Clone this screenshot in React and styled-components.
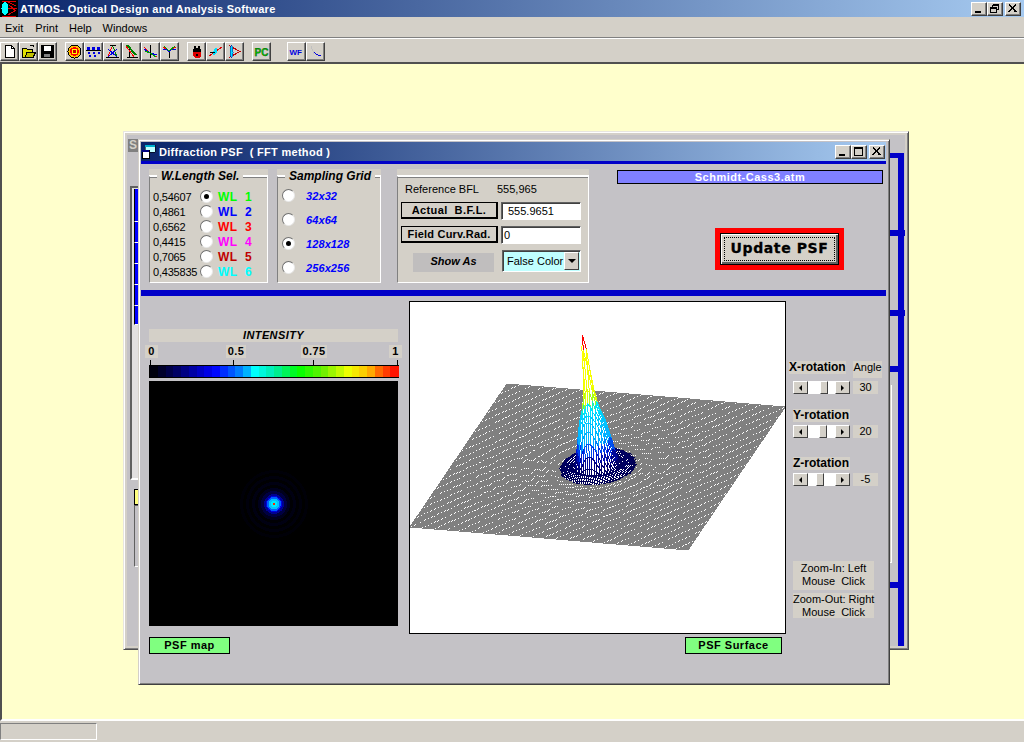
import React from "react";
import styled, { createGlobalStyle } from "styled-components";

const FACE = "#d4d0c8";
const PANEL = "#c4c2c6";
const RAIL = "#0000c8";

const GlobalStyle = createGlobalStyle`
  html, body { margin: 0; padding: 0; overflow: hidden; background: ${FACE}; }
  body { font-family: "Liberation Sans", Arial, sans-serif; font-size: 11px; color: #000; }
`;

/* ---------- colour helpers and plot data ---------- */

const lerpStops = (stops, t) => {
  const v = Math.max(0, Math.min(1, t));
  for (let i = 1; i < stops.length; i++) {
    if (v <= stops[i][0]) {
      const [t0, c0] = stops[i - 1];
      const [t1, c1] = stops[i];
      const k = (v - t0) / (t1 - t0 || 1);
      const rgb = c0.map((c, n) => Math.round(c + (c1[n] - c) * k));
      return `rgb(${rgb.join(",")})`;
    }
  }
  return `rgb(${stops[stops.length - 1][1].join(",")})`;
};

const BAR_STOPS = [
  [0, [0, 0, 0]],
  [0.12, [0, 0, 110]],
  [0.26, [0, 0, 255]],
  [0.38, [0, 150, 255]],
  [0.42, [0, 255, 255]],
  [0.5, [0, 235, 170]],
  [0.6, [0, 255, 0]],
  [0.7, [110, 240, 0]],
  [0.8, [240, 255, 0]],
  [0.88, [255, 190, 0]],
  [0.93, [255, 90, 0]],
  [1, [255, 0, 0]],
];

const SURFACE_STOPS = [
  [0, [0, 0, 80]],
  [0.12, [0, 0, 130]],
  [0.2, [0, 30, 230]],
  [0.28, [0, 170, 255]],
  [0.5, [0, 230, 255]],
  [0.55, [60, 255, 70]],
  [0.6, [225, 255, 0]],
  [1, [255, 255, 0]],
];

const PROFILE = [
  [0, 132], [1, 118], [2, 80], [3.6, 58], [5.6, 46], [7.4, 26], [8.8, 9], [10, 2.5], [11.2, 3.5], [13, 5.5], [14.6, 3], [16, 0.6],
];

const heightAt = (r) => {
  if (r >= 16) {
    return 1.2 * Math.exp(-(r - 16) / 18) * Math.cos((r * Math.PI) / 6) ** 2;
  }
  for (let i = 1; i < PROFILE.length; i++) {
    if (r <= PROFILE[i][0]) {
      const [a, ha] = PROFILE[i - 1];
      const [b, hb] = PROFILE[i];
      return ha + ((hb - ha) * (r - a)) / (b - a);
    }
  }
  return 0;
};

const GRID = 128;
// plane corners, in plot coordinates
const ORIGIN = [97, 82];
const U = [278 / GRID, 23 / GRID];
const V = [-97 / GRID, 143 / GRID];

const project = (i, j) => {
  const r = Math.hypot(i - GRID / 2, j - GRID / 2);
  const h = heightAt(r);
  return {
    x: ORIGIN[0] + U[0] * i + V[0] * j - (h * 15) / 132,
    y: ORIGIN[1] + U[1] * i + V[1] * j - h,
    h,
    r,
  };
};

const buildSurface = () => {
  const quads = [];
  for (let j = 0; j < GRID; j++) {
    for (let i = 0; i < GRID; i++) {
      const a = project(i, j);
      const b = project(i + 1, j);
      const c = project(i + 1, j + 1);
      const d = project(i, j + 1);
      const h = Math.max(a.h, b.h, c.h, d.h);
      let stroke = "#808080";
      if (a.r < 16.5) {
        stroke = lerpStops(SURFACE_STOPS, h / 132);
        if (h > 118 && i >= GRID / 2 && j >= GRID / 2) stroke = "#ff0000";
      }
      quads.push({
        key: `${i}-${j}`,
        points: [a, b, c, d].map((p) => `${p.x.toFixed(1)},${p.y.toFixed(1)}`).join(" "),
        stroke,
      });
    }
  }
  return quads;
};

const SURFACE = buildSurface();
const BAR_SEGMENTS = Array.from({ length: 32 }, (_, n) => lerpStops(BAR_STOPS, (n + 0.5) / 32));
const BAR_TICKS = [1, 84, 164, 248];
const SPOT_RINGS = [
  [34, "#000008"], [31, "#000000"], [28, "#00000c"], [25, "#000002"], [22, "#000012"], [19, "#000004"],
  [16, "#00001c"], [13, "#000040"], [10, "#000090"], [8, "#0000e0"], [7, "#0060ff"], [5.5, "#00c0ff"],
  [3, "#00e8ff"], [1.5, "#00ff80"],
];

const WAVELENGTHS = [
  { value: "0,54607", color: "#00ff00", on: true },
  { value: "0,4861", color: "#0000ff" },
  { value: "0,6562", color: "#ff0000" },
  { value: "0,4415", color: "#ff00ff" },
  { value: "0,7065", color: "#c00000" },
  { value: "0,435835", color: "#00ffff" },
];
const GRIDS = [
  { label: "32x32" },
  { label: "64x64" },
  { label: "128x128", on: true },
  { label: "256x256" },
];
const ROTATIONS = [
  { label: "X-rotation", value: "30", at: 12, first: true },
  { label: "Y-rotation", value: "20", at: 11, top: 15 },
  { label: "Z-rotation", value: "-5", at: 8, top: 19 },
];

/* ---------- frame ---------- */

const Screen = styled.div`
  width: 1024px;
  height: 742px;
  display: flex;
  flex-direction: column;
  background: ${FACE};
  overflow: hidden;
`;

const TitleBar = styled.div`
  height: ${(p) => p.$height || 17}px;
  flex: none;
  display: flex;
  align-items: center;
  background: linear-gradient(90deg, #0a246a, #a6caf0);
  color: #fff;
  font-weight: bold;
  font-size: 11px;
  letter-spacing: 0.3px;
  white-space: pre;
`;

const TitleText = styled.span`
  flex: 1;
  margin-left: ${(p) => p.$gap || 2}px;
`;

const WinButtons = styled.div`
  display: flex;
  margin-right: ${(p) => p.$right}px;
`;

const WinButton = styled.div`
  width: 16px;
  height: 14px;
  box-sizing: border-box;
  margin-left: ${(p) => p.$gap || 0}px;
  background: ${FACE};
  border: 1px solid;
  border-color: #fff #404040 #404040 #fff;
  box-shadow: inset -1px -1px #808080;
  display: flex;
  align-items: center;
  justify-content: center;

  svg { display: block; }
`;

const MenuBar = styled.div`
  flex: none;
  display: flex;
  align-items: center;
  padding: 1px 0 0 5px;
  box-sizing: border-box;
  height: 21px;
  border-bottom: 1px solid #808080;
  box-shadow: 0 1px #fff;
  font-size: 11px;
`;

const MenuItem = styled.span`
  margin-right: ${(p) => p.$gap}px;
`;

const ToolBar = styled.div`
  height: 25px;
  flex: none;
  margin-top: 1px;
  display: flex;
  align-items: center;
  padding-top: 1px;
  box-sizing: border-box;
  border-bottom: 2px solid #505050;
`;

const ToolGroup = styled.div`
  display: flex;
  margin-left: ${(p) => p.$gap || 0}px;
`;

const ToolButton = styled.div`
  width: 19px;
  height: 19px;
  box-sizing: border-box;
  border: 1px solid;
  border-color: #fff #404040 #404040 #fff;
  box-shadow: inset -1px -1px #808080;
  background: ${FACE};
  display: flex;
  align-items: center;
  justify-content: center;

  svg { display: block; }
`;

const Workspace = styled.div`
  position: relative;
  flex: 1;
  background: #ffffcc;
  border-left: 2px solid #505050;
  border-bottom: 2px solid #fff;
`;

const StatusBar = styled.div`
  height: 21px;
  flex: none;
  padding-top: 2px;
  box-sizing: border-box;
`;

const StatusCell = styled.div`
  width: 97px;
  height: 17px;
  box-sizing: border-box;
  border: 1px solid;
  border-color: #808080 #fff #fff #808080;
`;

/* ---------- window behind the dialog ---------- */

const BackWindow = styled.div`
  position: absolute;
  left: 121px;
  top: 67px;
  width: 786px;
  height: 519px;
  box-sizing: border-box;
  display: flex;
  justify-content: space-between;
  background: ${PANEL};
  border: 1px solid;
  border-color: #e8e6e0 #505050 #505050 #e8e6e0;
  box-shadow: inset 1px 1px #fff, inset -1px -1px #808080, inset 3px 3px ${FACE}, inset -3px -3px ${FACE};
`;

const LeftStrip = styled.div`
  width: 40px;
  padding: 7px 0 0 4px;
  display: flex;
  flex-direction: column;
`;

const StubTitle = styled.div`
  height: 13px;
  background: #808080;
  color: #d4d0c8;
  font-weight: bold;
  font-size: 12px;
  padding-left: 1px;
  line-height: 13px;
`;

const StubList = styled.div`
  margin: 34px 0 0 2px;
  height: 294px;
  box-sizing: border-box;
  padding: 1px 0 0 2px;
  background: #e2e0e0;
  border: 2px solid;
  border-color: #606060 #fff #fff #606060;
`;

const StubCell = styled.div`
  height: ${(p) => p.$height}px;
  background: #0000ff;
  border-bottom: 1px solid #fff;
  border-left: 1px solid #000;
`;

const StubYellow = styled.div`
  margin: 9px 0 0 6px;
  height: 16px;
  background: #ffff80;
  border: 1px solid #000;
  box-sizing: border-box;
`;

const StubSunken = styled.div`
  margin-left: 6px;
  height: 62px;
  box-sizing: border-box;
  border: 1px solid;
  border-color: #606060 #fff #fff #606060;
`;

const RightStrip = styled.div`
  width: 14px;
  height: 493px;
  margin: 21px 4px 0 0;
  border-right: 6px solid ${RAIL};
  display: flex;
  flex-direction: column;
`;

const Stub = styled.div`
  flex: none;
  height: ${(p) => p.$height || 6}px;
  margin-top: ${(p) => p.$top || 0}px;
  margin-right: ${(p) => (p.$over ? -7 : 0)}px;
  background: ${RAIL};
`;

const StubField = styled.div`
  flex: none;
  width: 4px;
  height: ${(p) => p.$height}px;
  margin-top: ${(p) => p.$top}px;
  background: #fff;
  border: 1px solid #808080;
  box-sizing: border-box;
  border-left: none;
`;

const StubPanel = styled.div`
  flex: none;
  width: 8px;
  height: 178px;
  margin-top: 13px;
  box-sizing: border-box;
  background: ${FACE};
  border-right: 1px solid #fff;
  border-bottom: 1px solid #fff;
  display: flex;
  flex-direction: column;
`;

/* ---------- dialog ---------- */

const Dialog = styled.div`
  position: absolute;
  left: 136px;
  top: 75px;
  width: 752px;
  height: 546px;
  box-sizing: border-box;
  padding: 2px 3px 0 2px;
  background: ${PANEL};
  border: 1px solid;
  border-color: ${FACE} #404040 #404040 ${FACE};
  box-shadow: inset 1px 1px #fff, inset -1px -1px #808080;
`;

const Rail = styled.div`
  height: ${(p) => p.$height}px;
  margin-top: ${(p) => p.$top || 0}px;
  background: ${RAIL};
`;

const TopRow = styled.div`
  display: flex;
  height: 114px;
  margin-top: 5px;
  padding-left: 8px;
`;

const GroupPanel = styled.div`
  position: relative;
  width: ${(p) => p.$width}px;
  margin-left: ${(p) => p.$gap || 0}px;
  box-sizing: border-box;
  padding-top: 7px;
  background: ${FACE};
`;

const GroupFrame = styled.div`
  height: 107px;
  box-sizing: border-box;
  padding: ${(p) => p.$pad};
  border: 1px solid;
  border-color: #fff #fff #fff #808080;
  box-shadow: inset 0 1px #808080, 0 -1px #fff;
  display: flex;
  flex-direction: column;
  gap: ${(p) => p.$gap || 0}px;
`;

const Legend = styled.div`
  position: absolute;
  top: 1px;
  left: ${(p) => p.$left}px;
  padding: 0 4px;
  background: ${FACE};
  font-weight: bold;
  font-style: italic;
  font-size: 12px;
  line-height: 13px;
  white-space: nowrap;
`;

const Radio = styled.span`
  flex: none;
  width: 13px;
  height: 13px;
  box-sizing: border-box;
  border-radius: 50%;
  background: #fff;
  border: 1px solid;
  border-color: #707070 #e8e8e8 #e8e8e8 #707070;
  display: flex;
  align-items: center;
  justify-content: center;

  &::after {
    content: "";
    display: ${(p) => (p.$on ? "block" : "none")};
    width: 5px;
    height: 5px;
    border-radius: 50%;
    background: #000;
  }
`;

const WaveRow = styled.div`
  display: flex;
  align-items: center;
  height: 15px;
`;

const WaveValue = styled.span`
  width: 47px;
  flex: none;
  font-size: 11px;
  letter-spacing: -0.2px;
`;

const WaveLabel = styled.span`
  width: 34px;
  margin-left: 5px;
  display: flex;
  justify-content: space-between;
  font-weight: bold;
  font-size: 12px;
  letter-spacing: 0.3px;
  color: ${(p) => p.$color};
`;

const GridRow = styled.div`
  display: flex;
  align-items: center;
  gap: 11px;
  height: 13px;
`;

const GridLabel = styled.span`
  color: #0000ff;
  font-style: italic;
  font-weight: bold;
  font-size: 11px;
  letter-spacing: 0.1px;
`;

const RefRow = styled.div`
  display: flex;
  height: 13px;
  padding-left: 4px;
  font-size: 11px;
  line-height: 13px;
`;

const RefValue = styled.span`
  margin-left: 18px;
`;

const FieldRow = styled.div`
  display: flex;
  align-items: flex-start;
`;

const FieldLabel = styled.div`
  width: 97px;
  height: 17px;
  box-sizing: border-box;
  border: 1px solid #000;
  border-bottom-width: 2px;
  border-right-width: 2px;
  font-weight: bold;
  font-size: 11px;
  letter-spacing: ${(p) => p.$spacing || 0}px;
  line-height: 14px;
  text-align: center;
  white-space: pre;
`;

const FieldInput = styled.div`
  width: 80px;
  height: 18px;
  margin-left: 3px;
  box-sizing: border-box;
  background: #fff;
  border: 1px solid;
  border-color: #606060 #fff #fff #606060;
  box-shadow: inset 1px 1px #404040;
  padding-left: ${(p) => p.$pad}px;
  font-size: 11px;
  line-height: 16px;
`;

const ShowAs = styled.div`
  width: 81px;
  height: 19px;
  margin: 3px 0 0 12px;
  background: #c0bebe;
  font-style: italic;
  font-weight: bold;
  font-size: 11px;
  line-height: 17px;
  text-align: center;
`;

const ComboBox = styled.div`
  width: 79px;
  height: 22px;
  margin-left: 8px;
  box-sizing: border-box;
  display: flex;
  background: #c0ffff;
  border: 1px solid;
  border-color: #606060 #fff #fff #606060;
  box-shadow: inset 1px 1px #404040;
  font-size: 11px;
  line-height: 20px;
  padding-left: 4px;
`;

const ComboText = styled.span`
  flex: 1;
`;

const ComboArrow = styled.div`
  width: 15px;
  height: 18px;
  margin: 1px 1px 0 0;
  box-sizing: border-box;
  background: ${FACE};
  border: 1px solid;
  border-color: #fff #404040 #404040 #fff;
  display: flex;
  align-items: center;
  justify-content: center;

  &::after {
    content: "";
    border: 4px solid transparent;
    border-top: 4px solid #000;
    border-bottom: 0;
  }
`;

const RunColumn = styled.div`
  width: 266px;
  margin-left: 28px;
  display: flex;
  flex-direction: column;
`;

const FileName = styled.div`
  height: 14px;
  margin-top: 1px;
  box-sizing: border-box;
  background: #8080ff;
  border: 1px solid #000;
  color: #fff;
  font-weight: bold;
  font-size: 11px;
  line-height: 13px;
  text-align: center;
  letter-spacing: 0.5px;
`;

const UpdateFrame = styled.div`
  width: 129px;
  height: 42px;
  margin: 44px 0 0 98px;
  box-sizing: border-box;
  padding: 5px;
  background: #ff0000;
`;

const UpdateButton = styled.div`
  height: 100%;
  box-sizing: border-box;
  background: ${FACE};
  border: 1px solid #000;
  box-shadow: inset 1px 1px #fff, inset -2px -2px #606060;
  padding: 3px;
`;

const UpdateLabel = styled.div`
  height: 100%;
  box-sizing: border-box;
  border: 1px dotted #000;
  font-family: "DejaVu Sans", sans-serif;
  font-weight: bold;
  font-size: 14px;
  letter-spacing: 0.6px;
  -webkit-text-stroke: 0.3px #000;
  line-height: 21px;
  text-align: center;
  color: #000;
`;

const MainRow = styled.div`
  display: flex;
  margin-top: 5px;
  padding-left: 8px;
`;

const MapColumn = styled.div`
  width: 249px;
  flex: none;
  padding-top: 28px;
`;

const CaptionBar = styled.div`
  height: 13px;
  background: ${FACE};
  font-style: italic;
  font-weight: bold;
  font-size: 11px;
  line-height: 13px;
  letter-spacing: 0.4px;
  text-align: center;
`;

const ScaleLabels = styled.div`
  display: flex;
  margin: 3px -4px 0;
`;

const ScaleLabel = styled.span`
  width: ${(p) => p.$width}px;
  height: 13px;
  margin-left: ${(p) => p.$gap || 0}px;
  background: ${FACE};
  font-weight: bold;
  font-size: 11px;
  line-height: 13px;
  letter-spacing: 0.4px;
  text-align: center;
`;

const ScaleBar = styled.svg`
  display: block;
  width: 250px;
  height: 18px;
  margin-top: 2px;
`;

const PsfMap = styled.svg`
  display: block;
  width: 249px;
  height: 245px;
  margin-top: 3px;
  background: #000;
`;

const PsfTag = styled.div`
  width: ${(p) => p.$width}px;
  height: 17px;
  box-sizing: border-box;
  background: #80ff80;
  border: 1px solid #000;
  font-weight: bold;
  font-size: 11px;
  line-height: 15px;
  letter-spacing: 0.5px;
  text-align: center;
`;

const MapTag = styled(PsfTag)`
  margin-top: 11px;
`;

const PlotColumn = styled.div`
  width: 377px;
  flex: none;
  margin-left: 11px;
  display: flex;
  flex-direction: column;
  align-items: flex-end;
`;

const PlotFrame = styled.div`
  width: 377px;
  height: 333px;
  box-sizing: border-box;
  background: #fff;
  border: 1px solid #000;
`;

const PlotSvg = styled.svg`
  display: block;
  width: 375px;
  height: 331px;
`;

const SurfaceTag = styled(PsfTag)`
  margin: 3px 4px 0 0;
`;

const ControlColumn = styled.div`
  flex: 1;
  padding: 60px 0 0 3px;
  display: flex;
  flex-direction: column;
  align-items: flex-start;
`;

const RotationLabel = styled.div`
  width: 57px;
  height: 13px;
  margin: ${(p) => (p.$top ? `${p.$top}px 0 0 4px` : "0")};
  background: ${FACE};
  font-weight: bold;
  font-size: 12px;
  line-height: 13px;
  white-space: nowrap;
`;

const HeadRow = styled.div`
  display: flex;
  gap: 7px;
`;

const AngleLabel = styled.div`
  width: 29px;
  height: 17px;
  background: ${FACE};
  font-size: 11px;
  line-height: 13px;
  text-align: center;
`;

const SliderRow = styled.div`
  display: flex;
  margin: 3px 0 0 4px;
`;

const ScrollBar = styled.div`
  width: 57px;
  height: 13px;
  display: flex;
  background: #fff;
`;

const ScrollButton = styled.div`
  flex: none;
  width: 15px;
  box-sizing: border-box;
  background: ${FACE};
  border: 1px solid;
  border-color: #fff #404040 #404040 #fff;
  display: flex;
  align-items: center;
  justify-content: center;

  &::after {
    content: "";
    border: 3px solid transparent;
    border-${(p) => (p.$dir === "left" ? "right" : "left")}: 3px solid #000;
    border-${(p) => p.$dir}: 0;
  }
`;

const ScrollTrack = styled.div`
  flex: 1;
  display: flex;
`;

const ScrollThumb = styled.div`
  width: 8px;
  margin-left: ${(p) => p.$at}px;
  box-sizing: border-box;
  background: ${FACE};
  border: 1px solid;
  border-color: #fff #404040 #404040 #fff;
`;

const ValueBox = styled.div`
  width: 25px;
  height: 13px;
  margin-left: 3px;
  background: ${FACE};
  font-size: 11px;
  line-height: 13px;
  text-align: center;
`;

const ZoomNote = styled.div`
  width: 81px;
  height: ${(p) => p.$height}px;
  margin: ${(p) => p.$top}px 0 0 4px;
  background: ${FACE};
  font-size: 11px;
  line-height: 13px;
  text-align: center;
  white-space: pre;
  padding-top: ${(p) => p.$pad}px;
  box-sizing: border-box;
`;

const IconText = styled.text`
  font-family: "Liberation Sans", sans-serif;
  font-weight: bold;
  font-size: ${(p) => p.$size}px;
`;

/* ---------- small drawings ---------- */

const Ico = ({ children }) => (
  <svg width="15" height="15" viewBox="0 0 15 15" shapeRendering="crispEdges">
    {children}
  </svg>
);

const TOOL_ICONS = [
  [
    <path key="a" d="M3.5 1.5h6l3 3v9h-9z" fill="#fff" stroke="#000" />,
    <path key="b" d="M9.5 1.5v3h3" fill="none" stroke="#000" />,
  ],
  [
    <path key="a" d="M1.5 4.5h4l1 1h5v8h-10z" fill="#e0e000" stroke="#000" />,
    <path key="b" d="M4 13.5l2-5h8.5l-2.5 5z" fill="#c0c000" stroke="#000" />,
    <path key="c" d="M9 1.5c2-1 3-.5 4 1" fill="none" stroke="#000" />,
  ],
  [
    <path key="a" d="M1 1h13v13H1z" fill="#000" />,
    <path key="b" d="M4 2h7v5H4z" fill="#fff" />,
    <path key="c" d="M4 10h6v3H4z" fill="#808080" />,
  ],
  [
    <circle key="a" cx="7.5" cy="7.5" r="7" fill="#000" />,
    <circle key="b" cx="7.5" cy="7.5" r="6" fill="#ffc000" />,
    <circle key="c" cx="7.5" cy="7.5" r="4.5" fill="#ff0000" />,
    <circle key="d" cx="7.5" cy="7.5" r="2.8" fill="#ffff00" />,
    <circle key="e" cx="7.5" cy="7.5" r="1.5" fill="#c00000" />,
  ],
  [
    <path key="a" d="M1 3h3v3H1zM6 3h3v3H6zM11 3h3v3h-3z" fill="#0000e0" />,
    <path key="b" d="M0 6.5h15" stroke="#000" />,
    <path key="c" d="M2 8h2v2H2zM7 8h2v2H7zM12 8h2v2h-2zM3 11h2v2H3zM8 11h2v2H8z" fill="#0000e0" />,
  ],
  [
    <path key="a" d="M1 13.5h13" stroke="#000" />,
    <path key="b" d="M7.5 1.5L3 13" stroke="#ff0000" fill="none" />,
    <path key="c" d="M7.5 1.5L12 13" stroke="#008000" fill="none" />,
    <path key="d" d="M3 5l9 8M12 5l-9 8" stroke="#0000e0" fill="none" />,
    <path key="e" d="M5 1h6" stroke="#000" />,
  ],
  [
    <path key="a" d="M3 13.5h11M5.5 13V2" stroke="#000" fill="none" />,
    <path key="b" d="M2 2l8 11" stroke="#ff0000" fill="none" />,
    <path key="c" d="M3 1l9 10" stroke="#008000" strokeWidth="2" fill="none" />,
  ],
  [
    <path key="a" d="M7.5 1v13" stroke="#000" />,
    <path key="b" d="M1 3l6 6 7 4" stroke="#ff0000" fill="none" />,
    <path key="c" d="M1 5l6 4 7 2" stroke="#0000e0" fill="none" />,
    <path key="d" d="M2 7l5 2 6 4" stroke="#00a000" fill="none" />,
  ],
  [
    <path key="a" d="M7.5 6v8" stroke="#000" />,
    <path key="b" d="M1 3l3 2 3 3 3-3 4-2" stroke="#ff0000" fill="none" />,
    <path key="c" d="M1 5l3 0 3 3 3-3 4 0" stroke="#0000e0" fill="none" />,
    <path key="d" d="M2 2l5 5 6-5" stroke="#00a000" fill="none" />,
  ],
  [
    <path key="a" d="M5 2h2v2h2V2h2v3h-6z" fill="#000" />,
    <path key="b" d="M4 5h8v3H4z" fill="#000" />,
    <path key="c" d="M4 8h8v4l-2 2H6l-2-2z" fill="#e00000" />,
    <path key="d" d="M7 10h2v2H7z" fill="#000" />,
  ],
  [
    <path key="a" d="M1 12L14 3" stroke="#e00000" fill="none" />,
    <path key="b" d="M8 3c2 2 2 6-2 9-2-2-1-7 2-9z" fill="#00e0ff" />,
    <path key="c" d="M2 8h5" stroke="#000" />,
  ],
  [
    <path key="a" d="M2 1.5L13 7.5 2 13.5" fill="none" stroke="#c00000" />,
    <path key="b" d="M4.5 1c2 2 2 11 0 13-2-2-2-11 0-13z" fill="#00e0ff" stroke="#0000a0" strokeWidth="0.5" />,
  ],
  [
    <IconText key="a" $size={10} x="0.5" y="11.5" fill="#00c000" stroke="#000" strokeWidth="0.25">PC</IconText>,
  ],
  [
    <IconText key="a" $size={8} x="0.5" y="11" fill="#0000e0">WF</IconText>,
  ],
  [
    <path key="a" d="M3 2c1 6 5 9 10 10" fill="none" stroke="#0000e0" />,
    <path key="b" d="M3 2l3 8" fill="none" stroke="#c0c0c0" />,
  ],
];

const GROUPS = [
  { gap: 0, from: 0, to: 3 },
  { gap: 8, from: 3, to: 9 },
  { gap: 8, from: 9, to: 12 },
  { gap: 8, from: 12, to: 13 },
  { gap: 16, from: 13, to: 15 },
];

const AppLogo = () => (
  <svg width="18" height="17" viewBox="0 0 18 17" shapeRendering="crispEdges">
    <rect x="0" y="0" width="18" height="17" fill="#000" />
    <ellipse cx="5" cy="8.5" rx="3.5" ry="6.5" fill="#00ffff" />
    <path d="M8 2l8 4M8 15l8-5M8 8h9M9 5l7 6" stroke="#e00000" fill="none" />
    <path d="M2 1l14 0M2 16h14" stroke="#e00000" />
  </svg>
);

const DialogLogo = () => (
  <svg width="15" height="15" viewBox="0 0 15 15" shapeRendering="crispEdges">
    <path d="M4 1h10v7H4z" fill="#c0ffff" stroke="#000" strokeWidth="0.6" />
    <path d="M4 1h10v2H4z" fill="#00b0d0" />
    <path d="M1 6h7v8H1z" fill="#fff" stroke="#000" />
    <path d="M1 6h7v2H1z" fill="#000080" />
  </svg>
);

const Glyph = ({ kind }) => (
  <svg width="10" height="9" viewBox="0 0 10 9" shapeRendering="crispEdges">
    {kind === "min" && <path d="M1 7h6v2H1z" fill="#000" />}
    {kind === "max" && <path d="M0.5 0.5h8v8h-8zM0.5 1.5h8" fill="none" stroke="#000" />}
    {kind === "restore" && (
      <>
        <path d="M2.5 0.5h6v5h-2M2.5 1.5h6M2.5 0.5v2" fill="none" stroke="#000" />
        <path d="M0.5 3.5h6v5h-6zM0.5 4.5h6" fill="none" stroke="#000" />
      </>
    )}
    {kind === "close" && <path d="M1 0.5l7 7.5M8 0.5l-7 7.5" fill="none" stroke="#000" strokeWidth="1.5" />}
  </svg>
);

const Surface = React.memo(() => (
  <PlotSvg viewBox="0 0 375 331" shapeRendering="crispEdges">
    {SURFACE.map((q) => (
      <polygon key={q.key} points={q.points} fill="#fff" stroke={q.stroke} strokeWidth="1" />
    ))}
  </PlotSvg>
));

const App = () => (
  <Screen>
    <GlobalStyle />
    <TitleBar>
      <AppLogo />
      <TitleText>ATMOS- Optical Design and Analysis Software</TitleText>
      <WinButtons $right={3}>
        <WinButton><Glyph kind="min" /></WinButton>
        <WinButton><Glyph kind="restore" /></WinButton>
        <WinButton $gap={2}><Glyph kind="close" /></WinButton>
      </WinButtons>
    </TitleBar>
    <MenuBar>
      <MenuItem $gap={12}>Exit</MenuItem>
      <MenuItem $gap={11}>Print</MenuItem>
      <MenuItem $gap={11}>Help</MenuItem>
      <MenuItem $gap={0}>Windows</MenuItem>
    </MenuBar>
    <ToolBar>
      {GROUPS.map((g) => (
        <ToolGroup key={g.from} $gap={g.gap}>
          {TOOL_ICONS.slice(g.from, g.to).map((icon, n) => (
            <ToolButton key={n}><Ico>{icon}</Ico></ToolButton>
          ))}
        </ToolGroup>
      ))}
    </ToolBar>
    <Workspace>
      <BackWindow>
        <LeftStrip>
          <StubTitle>S</StubTitle>
          <StubList>
            {[32, 20, 20, 20, 20, 18].map((h, n) => (
              <StubCell key={n} $height={h} />
            ))}
          </StubList>
          <StubYellow />
          <StubSunken />
        </LeftStrip>
        <RightStrip>
          <Stub $height={5} />
          <Stub $top={72} $over />
          <Stub $top={74} $over />
          <StubField $top={13} $height={19} />
          <Stub $top={18} />
          <StubPanel>
            <StubField $top={56} $height={19} />
            <StubField $top={5} $height={20} />
            <StubField $top={28} $height={19} />
            <StubField $top={6} $height={20} />
          </StubPanel>
          <Stub $top={19} />
        </RightStrip>
      </BackWindow>
      <Dialog>
        <TitleBar $height={19}>
          <DialogLogo />
          <TitleText $gap={3}>Diffraction PSF  ( FFT method )</TitleText>
          <WinButtons $right={1}>
            <WinButton><Glyph kind="min" /></WinButton>
            <WinButton><Glyph kind="max" /></WinButton>
            <WinButton $gap={2}><Glyph kind="close" /></WinButton>
          </WinButtons>
        </TitleBar>
        <Rail $height={3} />
        <TopRow>
          <GroupPanel $width={119}>
            <Legend $left={8}>W.Length Sel.</Legend>
            <GroupFrame $pad="12px 0 0 3px">
              {WAVELENGTHS.map((w, n) => (
                <WaveRow key={w.value}>
                  <WaveValue>{w.value}</WaveValue>
                  <Radio $on={w.on} />
                  <WaveLabel $color={w.color}>
                    <span>WL</span>
                    <span>{n + 1}</span>
                  </WaveLabel>
                </WaveRow>
              ))}
            </GroupFrame>
          </GroupPanel>
          <GroupPanel $width={104} $gap={9}>
            <Legend $left={8}>Sampling Grid</Legend>
            <GroupFrame $pad="12px 0 0 4px" $gap={11}>
              {GRIDS.map((g) => (
                <GridRow key={g.label}>
                  <Radio $on={g.on} />
                  <GridLabel>{g.label}</GridLabel>
                </GridRow>
              ))}
            </GroupFrame>
          </GroupPanel>
          <GroupPanel $width={192} $gap={16}>
            <GroupFrame $pad="6px 0 0 3px" $gap={6}>
              <RefRow>
                <span>Reference BFL</span>
                <RefValue>555,965</RefValue>
              </RefRow>
              <FieldRow>
                <FieldLabel $spacing={0.4}>{"Actual  B.F.L."}</FieldLabel>
                <FieldInput $pad={6}>555.9651</FieldInput>
              </FieldRow>
              <FieldRow>
                <FieldLabel $spacing={0.2}>Field Curv.Rad.</FieldLabel>
                <FieldInput $pad={2}>0</FieldInput>
              </FieldRow>
              <FieldRow>
                <ShowAs>Show As</ShowAs>
                <ComboBox>
                  <ComboText>False Color</ComboText>
                  <ComboArrow />
                </ComboBox>
              </FieldRow>
            </GroupFrame>
          </GroupPanel>
          <RunColumn>
            <FileName>Schmidt-Cass3.atm</FileName>
            <UpdateFrame>
              <UpdateButton>
                <UpdateLabel>Update PSF</UpdateLabel>
              </UpdateButton>
            </UpdateFrame>
          </RunColumn>
        </TopRow>
        <Rail $height={6} $top={7} />
        <MainRow>
          <MapColumn>
            <CaptionBar>INTENSITY</CaptionBar>
            <ScaleLabels>
              <ScaleLabel $width={13}>0</ScaleLabel>
              <ScaleLabel $width={20} $gap={68}>0.5</ScaleLabel>
              <ScaleLabel $width={26} $gap={55}>0.75</ScaleLabel>
              <ScaleLabel $width={13} $gap={62}>1</ScaleLabel>
            </ScaleLabels>
            <ScaleBar viewBox="0 0 250 18" shapeRendering="crispEdges">
              {BAR_TICKS.map((x) => (
                <rect key={x} x={x} y="0" width="1" height="5" fill="#000" />
              ))}
              <rect x="0" y="5" width="250" height="13" fill="#000" />
              {BAR_SEGMENTS.map((color, n) => (
                <rect key={n} x={1 + (n * 248) / 32} y="6" width={248 / 32 + 0.5} height="11" fill={color} />
              ))}
            </ScaleBar>
            <PsfMap viewBox="0 0 249 245" shapeRendering="crispEdges">
              {SPOT_RINGS.map(([r, color]) => (
                <circle key={r} cx="125" cy="123" r={r} fill={color} />
              ))}
              <rect x="124" y="122" width="2" height="2" fill="#ff2000" />
            </PsfMap>
            <MapTag $width={81}>PSF map</MapTag>
          </MapColumn>
          <PlotColumn>
            <PlotFrame>
              <Surface />
            </PlotFrame>
            <SurfaceTag $width={97}>PSF Surface</SurfaceTag>
          </PlotColumn>
          <ControlColumn>
            {ROTATIONS.map((r) => (
              <React.Fragment key={r.label}>
                {r.first ? (
                  <HeadRow>
                    <RotationLabel>{r.label}</RotationLabel>
                    <AngleLabel>Angle</AngleLabel>
                  </HeadRow>
                ) : (
                  <RotationLabel $top={r.top}>{r.label}</RotationLabel>
                )}
                <SliderRow>
                  <ScrollBar>
                    <ScrollButton $dir="left" />
                    <ScrollTrack>
                      <ScrollThumb $at={r.at} />
                    </ScrollTrack>
                    <ScrollButton $dir="right" />
                  </ScrollBar>
                  <ValueBox>{r.value}</ValueBox>
                </SliderRow>
              </React.Fragment>
            ))}
            <ZoomNote $height={29} $top={75} $pad={1}>{"Zoom-In: Left\nMouse  Click"}</ZoomNote>
            <ZoomNote $height={25} $top={3} $pad={0}>{"Zoom-Out: Right\nMouse  Click"}</ZoomNote>
          </ControlColumn>
        </MainRow>
      </Dialog>
    </Workspace>
    <StatusBar>
      <StatusCell />
    </StatusBar>
  </Screen>
);

export default App;
